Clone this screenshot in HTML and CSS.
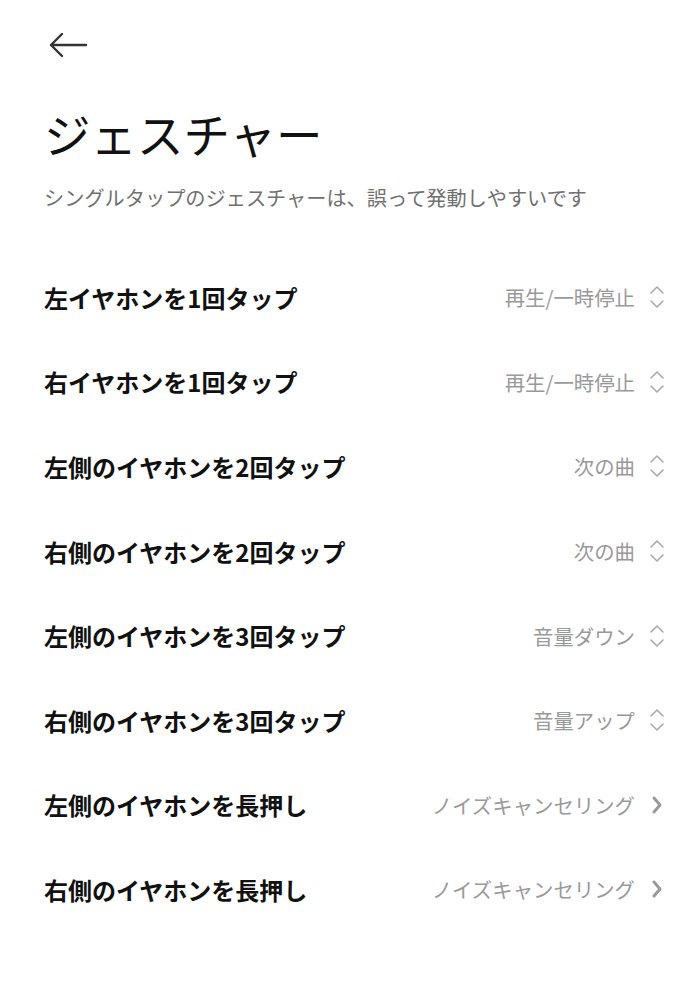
FILE: index.html
```html
<!DOCTYPE html>
<html lang="ja">
<head>
  <meta charset="UTF-8">
  <title>ジェスチャー</title>
  <meta name="viewport" content="width=device-width, initial-scale=1.0">
  <link rel="stylesheet" href="styles.css">
</head>
<body>

<div class="top-bar">
  <button class="back-btn" aria-label="戻る">
    <svg width="40" height="26" viewBox="0 0 40 26">
      <path d="M38 13H3M14 2L3 13l11 11" fill="none" stroke="#333" stroke-width="2.4" stroke-linecap="round" stroke-linejoin="round"/>
    </svg>
  </button>
</div>

<h1>ジェスチャー</h1>
<p class="subtitle">シングルタップのジェスチャーは、誤って発動しやすいです</p>

<ul class="gesture-list">
  <li class="row">
    <span class="label">左イヤホンを1回タップ</span>
    <span class="value">再生/一時停止</span>
    <span class="icon updown"><svg width="16" height="24" viewBox="0 0 16 24"><path d="M2 8l6-6 6 6M2 16l6 6 6-6" fill="none" stroke="#aaa" stroke-width="1.6" stroke-linecap="round" stroke-linejoin="round"/></svg></span>
  </li>
  <li class="row">
    <span class="label">右イヤホンを1回タップ</span>
    <span class="value">再生/一時停止</span>
    <span class="icon updown"><svg width="16" height="24" viewBox="0 0 16 24"><path d="M2 8l6-6 6 6M2 16l6 6 6-6" fill="none" stroke="#aaa" stroke-width="1.6" stroke-linecap="round" stroke-linejoin="round"/></svg></span>
  </li>
  <li class="row">
    <span class="label">左側のイヤホンを2回タップ</span>
    <span class="value">次の曲</span>
    <span class="icon updown"><svg width="16" height="24" viewBox="0 0 16 24"><path d="M2 8l6-6 6 6M2 16l6 6 6-6" fill="none" stroke="#aaa" stroke-width="1.6" stroke-linecap="round" stroke-linejoin="round"/></svg></span>
  </li>
  <li class="row">
    <span class="label">右側のイヤホンを2回タップ</span>
    <span class="value">次の曲</span>
    <span class="icon updown"><svg width="16" height="24" viewBox="0 0 16 24"><path d="M2 8l6-6 6 6M2 16l6 6 6-6" fill="none" stroke="#aaa" stroke-width="1.6" stroke-linecap="round" stroke-linejoin="round"/></svg></span>
  </li>
  <li class="row">
    <span class="label">左側のイヤホンを3回タップ</span>
    <span class="value">音量ダウン</span>
    <span class="icon updown"><svg width="16" height="24" viewBox="0 0 16 24"><path d="M2 8l6-6 6 6M2 16l6 6 6-6" fill="none" stroke="#aaa" stroke-width="1.6" stroke-linecap="round" stroke-linejoin="round"/></svg></span>
  </li>
  <li class="row">
    <span class="label">右側のイヤホンを3回タップ</span>
    <span class="value">音量アップ</span>
    <span class="icon updown"><svg width="16" height="24" viewBox="0 0 16 24"><path d="M2 8l6-6 6 6M2 16l6 6 6-6" fill="none" stroke="#aaa" stroke-width="1.6" stroke-linecap="round" stroke-linejoin="round"/></svg></span>
  </li>
  <li class="row">
    <span class="label">左側のイヤホンを長押し</span>
    <span class="value">ノイズキャンセリング</span>
    <span class="icon next"><svg width="16" height="24" viewBox="0 0 16 24"><path d="M5 5l6 7-6 7" fill="none" stroke="#9a9a9a" stroke-width="3" stroke-linecap="round" stroke-linejoin="round"/></svg></span>
  </li>
  <li class="row">
    <span class="label">右側のイヤホンを長押し</span>
    <span class="value">ノイズキャンセリング</span>
    <span class="icon next"><svg width="16" height="24" viewBox="0 0 16 24"><path d="M5 5l6 7-6 7" fill="none" stroke="#9a9a9a" stroke-width="3" stroke-linecap="round" stroke-linejoin="round"/></svg></span>
  </li>
</ul>

</body>
</html>
```

FILE: styles.css
```css
body {
  font-family: "Noto Sans CJK JP", "Noto Sans", sans-serif;
  margin: 0;
  padding: 0 34px 0 44px;
  background: #fff;
  color: #111;
}

.top-bar {
  height: 97px;
  display: flex;
  align-items: flex-start;
  padding-top: 32px;
  box-sizing: border-box;
}

.back-btn {
  border: none;
  background: none;
  padding: 0;
  margin-left: 4px;
  cursor: pointer;
  display: flex;
}

h1 {
  margin: 0;
  font-size: 46.5px;
  font-weight: 400;
  line-height: 72px;
  color: #111;
}

.subtitle {
  margin: 14px 0 0;
  font-size: 20.2px;
  line-height: 30px;
  color: #707070;
}

.gesture-list {
  list-style: none;
  margin: 42px 0 0;
  padding: 0;
}

.row {
  display: flex;
  align-items: center;
  height: 84.6px;
}

.label {
  flex: 1;
  font-size: 24px;
  font-weight: 700;
  color: #111;
}

.value {
  font-size: 20.4px;
  color: #999;
}

.icon {
  display: flex;
  margin-left: 14px;
}
```
